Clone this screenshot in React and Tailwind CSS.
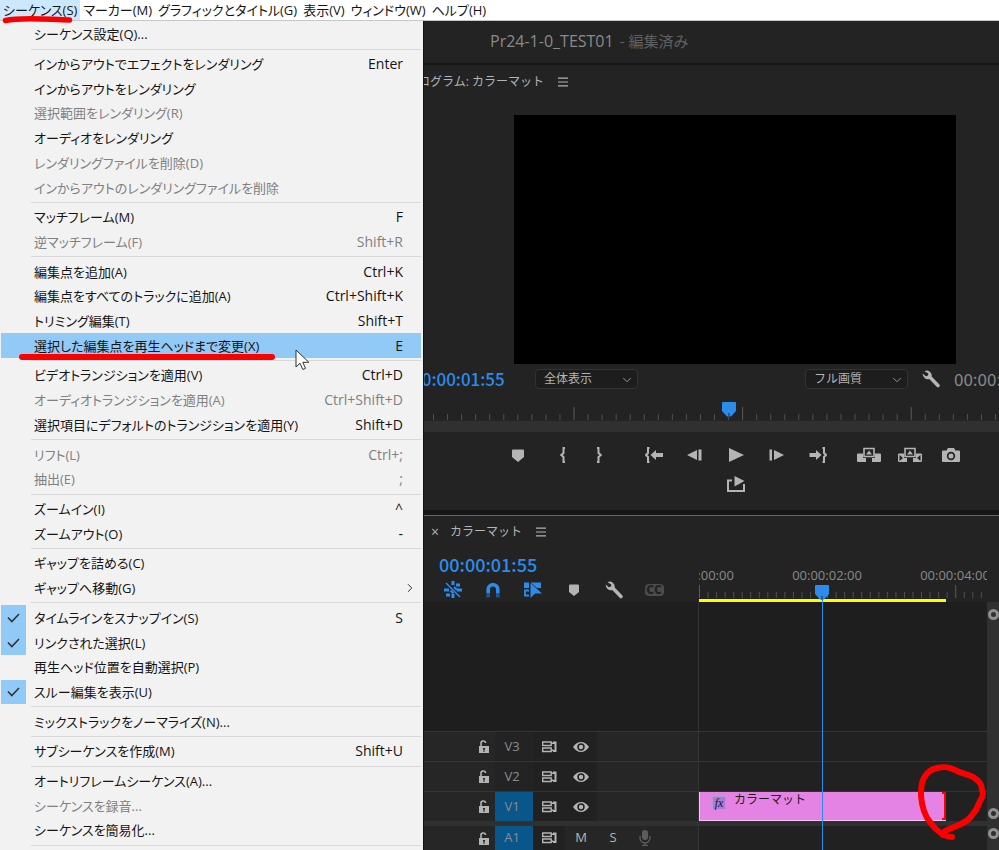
import { useState } from "react";
import { ChevronDown, ChevronRight } from "lucide-react";

const menuBar = [
  "シーケンス(S)",
  "マーカー(M)",
  "グラフィックとタイトル(G)",
  "表示(V)",
  "ウィンドウ(W)",
  "ヘルプ(H)",
];

// each inner array is one block between two separators
const menuGroups = [
  [{ label: "シーケンス設定(Q)..." }],
  [
    { label: "インからアウトでエフェクトをレンダリング", keys: "Enter" },
    { label: "インからアウトをレンダリング" },
    { label: "選択範囲をレンダリング(R)", disabled: true },
    { label: "オーディオをレンダリング" },
    { label: "レンダリングファイルを削除(D)", disabled: true },
    { label: "インからアウトのレンダリングファイルを削除", disabled: true },
  ],
  [
    { label: "マッチフレーム(M)", keys: "F" },
    { label: "逆マッチフレーム(F)", keys: "Shift+R", disabled: true },
  ],
  [
    { label: "編集点を追加(A)", keys: "Ctrl+K" },
    { label: "編集点をすべてのトラックに追加(A)", keys: "Ctrl+Shift+K" },
    { label: "トリミング編集(T)", keys: "Shift+T" },
    { label: "選択した編集点を再生ヘッドまで変更(X)", keys: "E", active: true },
  ],
  [
    { label: "ビデオトランジションを適用(V)", keys: "Ctrl+D" },
    { label: "オーディオトランジションを適用(A)", keys: "Ctrl+Shift+D", disabled: true },
    { label: "選択項目にデフォルトのトランジションを適用(Y)", keys: "Shift+D" },
  ],
  [
    { label: "リフト(L)", keys: "Ctrl+;", disabled: true },
    { label: "抽出(E)", keys: ";", disabled: true },
  ],
  [
    { label: "ズームイン(I)", keys: "^" },
    { label: "ズームアウト(O)", keys: "-" },
  ],
  [{ label: "ギャップを詰める(C)" }, { label: "ギャップへ移動(G)", submenu: true }],
  [
    { label: "タイムラインをスナップイン(S)", keys: "S", checked: true },
    { label: "リンクされた選択(L)", checked: true },
    { label: "再生ヘッド位置を自動選択(P)" },
    { label: "スルー編集を表示(U)", checked: true },
  ],
  [{ label: "ミックストラックをノーマライズ(N)..." }],
  [{ label: "サブシーケンスを作成(M)", keys: "Shift+U" }],
  [
    { label: "オートリフレームシーケンス(A)..." },
    { label: "シーケンスを録音...", disabled: true },
    { label: "シーケンスを簡易化..." },
  ],
];

// =========================
// ICONS
// =========================
const Icon = ({ w = 18, h = 16, className = "", children }) => (
  <svg
    width={w}
    height={h}
    viewBox={`0 0 ${w} ${h}`}
    fill="currentColor"
    className={`shrink-0 ${className}`}
    aria-hidden="true"
  >
    {children}
  </svg>
);

const MarkerIcon = () => (
  <Icon w={12} h={13}>
    <path d="M0 1.5Q0 .5 1 .5h10q1 0 1 1V8l-6 5-6-5z" />
  </Icon>
);

const SmallMarkerIcon = () => (
  <Icon w={10} h={12}>
    <path d="M0 1.5Q0 .5 1 .5h8q1 0 1 1V8l-5 4-5-4z" />
  </Icon>
);

const InIcon = () => (
  <Icon w={6} h={16}>
    <path d="M5 1H3.500V6L1.200 8l2.300 2v5H5" fill="none" stroke="currentColor" strokeWidth="2" />
  </Icon>
);

const OutIcon = () => (
  <Icon w={6} h={16}>
    <path d="M1 1h1.500V6l2.300 2-2.300 2v5H1" fill="none" stroke="currentColor" strokeWidth="2" />
  </Icon>
);

const GoInIcon = () => (
  <Icon w={18}>
    <path d="M4.500 1H3V6L1 8l2 2v5h1.500" fill="none" stroke="currentColor" strokeWidth="2" />
    <path d="M5.500 8l5.500-5v3h7v4h-7v3z" />
  </Icon>
);

const GoOutIcon = () => (
  <Icon w={18}>
    <path d="M13.500 1H15V6l2 2-2 2v5h-1.500" fill="none" stroke="currentColor" strokeWidth="2" />
    <path d="M12.500 8L7 3v3H.5v4H7v3z" />
  </Icon>
);

const StepBackIcon = () => (
  <Icon w={15} h={12}>
    <path d="M0 6l10-5v10zM11.500 0.500H14.500V11.500H11.500z" />
  </Icon>
);

const StepForwardIcon = () => (
  <Icon w={15} h={12}>
    <path d="M15 6L5 1v10zM0.500 0.500H3V11.500H0.500z" />
  </Icon>
);

const PlayIcon = () => (
  <Icon w={16} h={14}>
    <path d="M1 0l15 7-15 7z" />
  </Icon>
);

const LiftIcon = () => (
  <Icon w={24} h={16}>
    <path d="M1 6.500h5V11h3v4H1q-1 0-1-1V7.500q0-1 1-1zM23 6.500h-5V11h-3v4h8q1 0 1-1V7.500q0-1-1-1z" />
    <path d="M7 1.500h10v8H7z" fill="none" stroke="currentColor" strokeWidth="1.600" />
    <path d="M12 3.500l3 4H9z" />
  </Icon>
);

const ExtractIcon = () => (
  <Icon w={24} h={16}>
    <path d="M1 6.500h5V11h3v4H1q-1 0-1-1V7.500q0-1 1-1zM23 6.500h-5V11h-3v4h8q1 0 1-1V7.500q0-1-1-1z" />
    <path d="M7 1.500h10v8H7z" fill="none" stroke="currentColor" strokeWidth="1.600" />
    <path d="M12 3.500l3 4H9z" />
    <path d="M1.500 8l3.500 3-3.500 3zM22.500 8l-3.500 3 3.500 3z" fill="#232323" />
  </Icon>
);

const CameraIcon = () => (
  <Icon w={18} h={14}>
    <path
      fillRule="evenodd"
      d="M6 0h6l1.500 2.500H17q1 0 1 1V13q0 1-1 1H1q-1 0-1-1V3.500q0-1 1-1h3.500zM9 3.800a4.200 4.200 0 1 0 0 8.400 4.200 4.200 0 0 0 0-8.400zM9 5.500a2.500 2.500 0 1 1 0 5 2.500 2.500 0 0 1 0-5z"
    />
  </Icon>
);

const ExportIcon = () => (
  <Icon w={18} h={16}>
    <path d="M5 4.500H1v10.500h16V8" fill="none" stroke="currentColor" strokeWidth="2" />
    <path d="M7.500 0l10 5-10 5.500z" />
  </Icon>
);

const WrenchIcon = () => (
  <Icon w={18} h={18}>
    <path d="M2.500 1.200A5 5 0 0 1 9.700 6.600l7.500 7.700a1.700 1.700 0 0 1-2.500 2.500L7.200 9A5 5 0 0 1 .8 3.600l3 2.700L6 5.500l.3-2z" />
  </Icon>
);

const HamburgerIcon = () => (
  <Icon w={10} h={10}>
    <path d="M0 0.500h10v1.200H0zM0 4.400h10v1.200H0zM0 8.300h10v1.200H0z" />
  </Icon>
);

const NestIcon = () => (
  <Icon w={18} h={18}>
    <path d="M7.500 0h3v4h-3zM12 2.500h4v3h-4zM0 7.500h5v3H0zM13 7.500h5v3h-5zM2 12.500h4v3H2zM7.500 13h3v4h-3z" />
    <path d="M2 2l14 14" stroke="currentColor" strokeWidth="1.400" />
    <path d="M6.500 9.500l3 3M10 6l3 3" stroke="currentColor" strokeWidth="2" />
  </Icon>
);

const SnapIcon = () => (
  <Icon w={14} h={15}>
    <path d="M2.200 10.500V6.500a4.800 4.800 0 0 1 9.600 0v4" fill="none" stroke="currentColor" strokeWidth="3.600" />
    <path d="M.4 10.500h3.600v4H.4zM10 10.500h3.600v4H10z" fill="#1f5591" />
  </Icon>
);

const LinkedIcon = () => (
  <Icon w={18} h={16}>
    <path d="M0 0.500h5v5.500H0zM6.500 .5H17V6h-4z" />
    <path d="M5 8.500H1v5h4" fill="none" stroke="currentColor" strokeWidth="1.800" />
    <path d="M6.500 1v15l4.500-4.500h7z" />
  </Icon>
);

const LockIcon = () => (
  <Icon w={10} h={13}>
    <path d="M2 6V3.500a2.300 2.300 0 0 1 4.600-.5" fill="none" stroke="currentColor" strokeWidth="1.600" />
    <path fillRule="evenodd" d="M0 6h10v7H0zM4 8v1.500h.5V12h1V9.500H6V8z" />
  </Icon>
);

const SyncIcon = () => (
  <Icon w={15} h={12}>
    <path
      d="M.7 1h8.500v3.500H.7zM.7 7h8.500v3.500H.7z"
      fill="none"
      stroke="currentColor"
      strokeWidth="1.400"
    />
    <path d="M9 1.500h2.500V3H9zM9 8.500h2.500V10H9zM11 .5h3.500v10.500H11v-2h1.500v-6H11z" />
  </Icon>
);

const EyeIcon = () => (
  <Icon w={16} h={10}>
    <path
      fillRule="evenodd"
      d="M0 5Q3.500 0 8 0t8 5q-3.500 5-8 5T0 5zm4.300 0a3.700 3.700 0 1 0 7.400 0 3.700 3.700 0 0 0-7.400 0z"
    />
    <circle cx="8" cy="5" r="2.200" />
  </Icon>
);

const MicIcon = () => (
  <Icon w={12} h={16} className="text-[#5c5c5c]">
    <rect x="3" y="0" width="6" height="10" rx="3" />
    <path d="M1 6v2a5 5 0 0 0 10 0V6M6 13v2.500M3 15.300h6" fill="none" stroke="currentColor" strokeWidth="1.300" />
  </Icon>
);

const CheckIcon = () => (
  <Icon w={13} h={10}>
    <path d="M1 4.500l3.800 4L12 1" fill="none" stroke="currentColor" strokeWidth="1.600" />
  </Icon>
);

const PlayheadIcon = () => (
  <Icon w={14} h={15} className="text-[#2d8ceb]">
    <path d="M0 1q0-1 1-1h12q1 0 1 1v8l-5 5.500H5L0 9z" />
    <path d="M7 11v4" stroke="#10304f" />
  </Icon>
);

// =========================
// MENU
// =========================
const MenuItem = ({ item }) => (
  <button
    type="button"
    role={item.checked ? "menuitemcheckbox" : "menuitem"}
    aria-checked={item.checked}
    disabled={item.disabled}
    className={`relative flex min-h-5 flex-1 items-center pr-[18px] text-left ${
      item.active ? "bg-[#91c9f7]" : "enabled:hover:bg-[#e2effa]"
    } ${item.disabled ? "text-[#808080]" : "text-[#141414]"}`}
  >
    <span
      className={`mr-2 flex w-[25px] items-center justify-center self-stretch ${
        item.checked ? "bg-[#91c9f7] text-[#333]" : ""
      }`}
    >
      {item.checked && <CheckIcon />}
    </span>
    <span className="flex-1 whitespace-nowrap text-[13px]">{item.label}</span>
    {item.keys && <span>{item.keys}</span>}
    {item.submenu && <ChevronRight size={14} strokeWidth={1.5} className="-mr-3.5" />}
    {item.active && (
      <>
        <span className="absolute -bottom-0.5 left-[18px] h-1.5 w-[256px] rounded-full bg-[#fb0000]" />
        <svg
          className="absolute left-[294px] top-4 z-10"
          width="15"
          height="22"
          viewBox="0 0 15 22"
          aria-hidden="true"
        >
          <path
            d="M1 1v17l4-3.800 2.800 6.300 2.700-1.200L7.800 13.300h6z"
            fill="#fff"
            stroke="#333"
            strokeWidth="1"
          />
        </svg>
      </>
    )}
  </button>
);

const SequenceMenu = () => (
  <div
    role="menu"
    aria-label="シーケンス"
    className="flex w-[424px] shrink-0 flex-col border-r border-[#111] bg-[#f2f2f2] pb-0.5 pl-px pr-0.5 pt-px text-sm leading-5"
  >
    {menuGroups.map((group) => (
      <div key={group[0].label} className="contents">
        {group.map((item) => (
          <MenuItem key={item.label} item={item} />
        ))}
        <div role="separator" className="py-0.5 pl-[30px]">
          <div className="h-px bg-[#d8d8d8]" />
        </div>
      </div>
    ))}
  </div>
);

// =========================
// PROGRAM MONITOR
// =========================
const Dropdown = ({ label, value }) => (
  <label className="relative block w-[103px]">
    <span className="sr-only">{label}</span>
    <select
      defaultValue={value}
      className="block h-5 w-full appearance-none rounded-sm border border-[#333] bg-[#1d1d1d] pl-2 text-xs leading-4 text-[#b4b4b4]"
    >
      <option>{value}</option>
    </select>
    <ChevronDown
      size={14}
      strokeWidth={1.5}
      className="pointer-events-none absolute right-1 top-1 text-[#a0a0a0]"
    />
  </label>
);

const ToolButton = ({ label, className = "w-[41px]", children }) => (
  <button type="button" aria-label={label} className={`flex items-center justify-center ${className}`}>
    {children}
  </button>
);

const Ticks = ({ count, step, start, major, first, height }) => (
  <svg className="block w-full" height={height} aria-hidden="true">
    {Array.from({ length: count }, (_, i) => {
      const isMajor = i % major === first;
      return (
        <rect
          key={i}
          x={start + i * step}
          y={isMajor ? height - 14 : height - 7}
          width="1"
          height={isMajor ? 13 : 6}
          fill={isMajor ? "#5a5a5a" : "#505050"}
        />
      );
    })}
  </svg>
);

const ProgramMonitor = () => (
  <section className="flex min-h-0 flex-1 flex-col border-b-[5px] border-[#161616] bg-[#232323]">
    <div className="flex h-[34px] items-center gap-3.5 text-xs text-[#b4b4b4]">
      <h2 className="-ml-1.5 whitespace-nowrap">ログラム: カラーマット</h2>
      <button type="button" aria-label="パネルメニュー">
        <HamburgerIcon />
      </button>
    </div>

    <div className="ml-[90px] mr-[43px] mt-4 min-h-0 flex-1 bg-black" />

    <div className="flex h-[30px] items-center overflow-hidden">
      <span className="-ml-3 w-[123px] shrink-0 font-['Noto_Sans_CJK_JP',sans-serif] text-[17px] font-medium text-[#2d8ceb]">
        00:00:01:55
      </span>
      <Dropdown label="ズームレベル" value="全体表示" />
      <div className="flex-1" />
      <Dropdown label="再生時の解像度" value="フル画質" />
      <ToolButton label="設定" className="w-[46px] text-[#b4b4b4]">
        <WrenchIcon />
      </ToolButton>
      <span className="w-[45px] overflow-hidden whitespace-nowrap font-['Noto_Sans_CJK_JP',sans-serif] text-[17px] text-[#8a8a8a]">
        00:00:04:00
      </span>
    </div>

    <div className="relative pt-2">
      <Ticks count={42} step={14.05} start={9} major={12} first={10} height={19} />
      <div className="absolute left-[298px] top-2">
        <PlayheadIcon />
      </div>
    </div>
    <div className="h-[11px] bg-[#303030]" />

    <div className="flex h-[46px] overflow-hidden pl-[67px] text-[#b4b4b4]">
      <ToolButton label="マーカーを追加" className="w-[54px]">
        <MarkerIcon />
      </ToolButton>
      <ToolButton label="インをマーク" className="w-9">
        <InIcon />
      </ToolButton>
      <ToolButton label="アウトをマーク" className="mr-4 w-9">
        <OutIcon />
      </ToolButton>
      <ToolButton label="インへ移動">
        <GoInIcon />
      </ToolButton>
      <ToolButton label="1フレーム前へ戻る">
        <StepBackIcon />
      </ToolButton>
      <ToolButton label="再生">
        <PlayIcon />
      </ToolButton>
      <ToolButton label="1フレーム先へ進む">
        <StepForwardIcon />
      </ToolButton>
      <ToolButton label="アウトへ移動" className="mr-2.5 w-[41px]">
        <GoOutIcon />
      </ToolButton>
      <ToolButton label="リフト">
        <LiftIcon />
      </ToolButton>
      <ToolButton label="抽出">
        <ExtractIcon />
      </ToolButton>
      <ToolButton label="フレームを書き出し">
        <CameraIcon />
      </ToolButton>
    </div>
    <div className="-mt-0.5 flex pb-[18px] pl-[291px] text-[#b4b4b4]">
      <ToolButton label="クイック書き出し">
        <ExportIcon />
      </ToolButton>
    </div>
  </section>
);

// =========================
// TIMELINE
// =========================
const TrackHeader = ({ name, target, audio }) => (
  <div
    className={`flex border-[#343434] bg-[#262626] pl-[50px] text-[#b4b4b4] ${
      audio ? "h-6 overflow-hidden" : "h-[30px] border-t"
    }`}
  >
    <ToolButton label={`${name} ロック`} className="w-[21px] pr-0.5">
      <LockIcon />
    </ToolButton>
    <button
      type="button"
      className={`w-[38px] pr-1 text-[13px] text-[#8c8c8c] ${target ? "bg-[#08568a]" : "bg-[#232323]"}`}
    >
      {name}
    </button>
    <div className="flex bg-[#212121]">
      <ToolButton label={`${name} 同期ロック`} className="w-8">
        <SyncIcon />
      </ToolButton>
      {!audio && (
        <ToolButton label={`${name} 表示`} className="w-8">
          <EyeIcon />
        </ToolButton>
      )}
    </div>
    {audio && (
      <>
        <button type="button" aria-label="ミュート" className="w-8 text-[13px]">
          M
        </button>
        <button type="button" aria-label="ソロ" className="w-8 text-[13px]">
          S
        </button>
        <ToolButton label="ボイスオーバー録音" className="w-8">
          <MicIcon />
        </ToolButton>
      </>
    )}
  </div>
);

const Handle = () => <div className="size-[11px] shrink-0 rounded-full border-[3px] border-[#8f8f8f]" />;

const Timeline = () => {
  const [tracks] = useState([{ name: "V3" }, { name: "V2" }, { name: "V1", target: true }]);

  return (
    <section className="flex h-[335px] shrink-0 flex-col border-t border-[#2a76c6] bg-[#232323]">
      <div className="flex h-8 items-center text-xs text-[#b4b4b4]">
        <button type="button" aria-label="閉じる" className="w-[26px] pr-1 text-sm">
          ×
        </button>
        <h2 className="mr-3.5 whitespace-nowrap">カラーマット</h2>
        <button type="button" aria-label="パネルメニュー">
          <HamburgerIcon />
        </button>
      </div>

      <div className="flex min-h-0 flex-1">
        {/* track headers */}
        <div className="flex w-[275px] shrink-0 flex-col">
          <div className="h-[34px] pl-[15px] font-['Noto_Sans_CJK_JP',sans-serif] text-lg font-medium leading-8 text-[#2d8ceb]">
            00:00:01:55
          </div>
          <div className="flex h-5 items-start pl-2.5 text-[#b4b4b4]">
            <ToolButton label="ネスト" className="h-4 w-10 pr-0.5 text-[#2d8ceb]">
              <NestIcon />
            </ToolButton>
            <ToolButton label="スナップ" className="h-4 w-10 pr-0.5 text-[#2d8ceb]">
              <SnapIcon />
            </ToolButton>
            <ToolButton label="リンクされた選択" className="h-4 w-10 pr-0.5 text-[#2d8ceb]">
              <LinkedIcon />
            </ToolButton>
            <ToolButton label="マーカーを追加" className="h-4 w-10">
              <SmallMarkerIcon />
            </ToolButton>
            <ToolButton label="タイムライン表示設定" className="h-4 w-10">
              <WrenchIcon />
            </ToolButton>
            <button type="button" aria-label="キャプション" className="flex h-4 w-10 items-center justify-center">
              <span className="w-[19px] rounded-sm bg-[#4c4c4c] text-center text-xs font-extrabold leading-3 text-[#232323]">
                CC
              </span>
            </button>
          </div>
          <div className="flex flex-1 flex-col border-r border-[#343434]">
            <div className="flex-1 bg-[#1e1e1e]" />
            {tracks.map((track) => (
              <TrackHeader key={track.name} {...track} />
            ))}
            <div className="h-[5px] bg-[#303030]" />
            <TrackHeader name="A1" target audio />
          </div>
        </div>

        {/* ruler and lanes */}
        <div className="relative flex min-w-0 flex-1 flex-col overflow-hidden bg-[#1e1e1e]">
          <div className="h-[54px] bg-[#232323] pt-[18px]">
            <div className="-ml-16 flex text-[13px] leading-[18px] text-[#8a8a8a]">
              <span className="w-32 shrink-0 text-center">00:00:00:00</span>
              <span className="w-32 shrink-0 text-center">00:00:02:00</span>
              <span className="w-32 shrink-0 text-center">00:00:04:00</span>
            </div>
            <Ticks count={34} step={8.54} start={0} major={15} first={0} height={15} />
            <div className="h-[3px] w-[247px] bg-[#ffff00]" />
          </div>
          <div className="flex-1" />
          <div className="h-[30px] border-t border-[#343434] bg-[#212121]" />
          <div className="h-[30px] border-t border-[#343434] bg-[#212121]" />
          <div className="h-[30px] border-t border-[#343434] bg-[#212121]">
            <div className="relative flex h-full w-[247px] items-start gap-2 border-b border-l border-[#f5c6f5] bg-[#e583e5] pl-3 text-xs leading-4 text-[#1b1b1b]">
              <span className="mt-1 flex h-3.5 w-3.5 items-center justify-center border border-[#b79ad0] bg-[#a67cd8] font-['Liberation_Serif',serif] text-xs italic leading-3">
                fx
              </span>
              <span>カラーマット</span>
              <span className="absolute inset-y-0 right-0 w-1 border-y-2 border-r-2 border-[#fb0000]" />
            </div>
          </div>
          <div className="h-[5px] bg-[#303030]" />
          <div className="h-6 bg-[#212121]" />

          {/* playhead */}
          <div className="absolute bottom-0 left-[116px] top-[37px] flex flex-col items-center">
            <PlayheadIcon />
            <div className="w-px flex-1 bg-[#2d8ceb]" />
          </div>

          <svg
            className="absolute bottom-2 left-[218px] overflow-visible"
            width="72"
            height="80"
            viewBox="0 0 72 80"
            aria-hidden="true"
          >
            <path
              d="M35 75C28 75 19 69 13 60C7 53 5 45 4 34C4 28 4 23 6 18C9 11 14 7 20 6C28 4 33 5 40 9C46 12 51 12 56 15C62 19 65 22 65 28C67 32 66 35 63 39C61 44 60 48 55 53C52 58 48 60 42 63L30 68C27 69 26 70 26 73"
              fill="none"
              stroke="#fb0000"
              strokeWidth="6"
              strokeLinecap="round"
              strokeLinejoin="round"
            />
          </svg>
        </div>

        {/* vertical scroll bars */}
        <div className="flex w-3 shrink-0 flex-col items-center bg-[#232323] pt-[54px]">
          <div className="flex w-full flex-1 flex-col items-center justify-between bg-[#303030] pb-0.5 pt-[7px]">
            <Handle />
            <Handle />
          </div>
          <div className="h-[29px] w-full bg-[#303030] pl-px pt-[7px]">
            <Handle />
          </div>
        </div>
      </div>
    </section>
  );
};

const App = () => {
  const [open, setOpen] = useState(0);

  return (
    <div className="flex h-screen flex-col overflow-hidden bg-white font-['Open_Sans','Noto_Sans_CJK_JP',sans-serif]">
      <nav className="flex h-[21px] shrink-0 border-b border-[#c4c8c8] text-[13px] leading-[18px] text-[#141414] [font-feature-settings:'palt']">
        {menuBar.map((name, i) => (
          <button
            key={name}
            type="button"
            onClick={() => setOpen(i)}
            className={`relative whitespace-nowrap px-[3px] ${open === i ? "bg-[#cce8ff]" : ""}`}
          >
            {name}
            {i === 0 && (
              <svg
                className="absolute left-0.5 top-3.5 z-10"
                width="72"
                height="10"
                viewBox="0 0 72 10"
                aria-hidden="true"
              >
                <path
                  d="M3.500 6.500C20 3 45 5.500 67.500 6"
                  fill="none"
                  stroke="#fb0000"
                  strokeWidth="5.500"
                  strokeLinecap="round"
                />
              </svg>
            )}
          </button>
        ))}
      </nav>

      <div className="flex min-h-0 flex-1">
        <div className="flex [font-feature-settings:'palt']">
          <SequenceMenu />
        </div>
        <main className="flex min-w-0 flex-1 flex-col overflow-hidden">
          <header className="flex h-11 shrink-0 items-center gap-1.5 border-b-2 border-[#161616] bg-[#232323] pb-0.5 pl-[66px]">
            <h1 className="text-base text-[#8a8a8a]">Pr24-1-0_TEST01</h1>
            <span className="text-[15px] text-[#606060]">- 編集済み</span>
          </header>
          <ProgramMonitor />
          <Timeline />
        </main>
      </div>
    </div>
  );
};

export default App;
